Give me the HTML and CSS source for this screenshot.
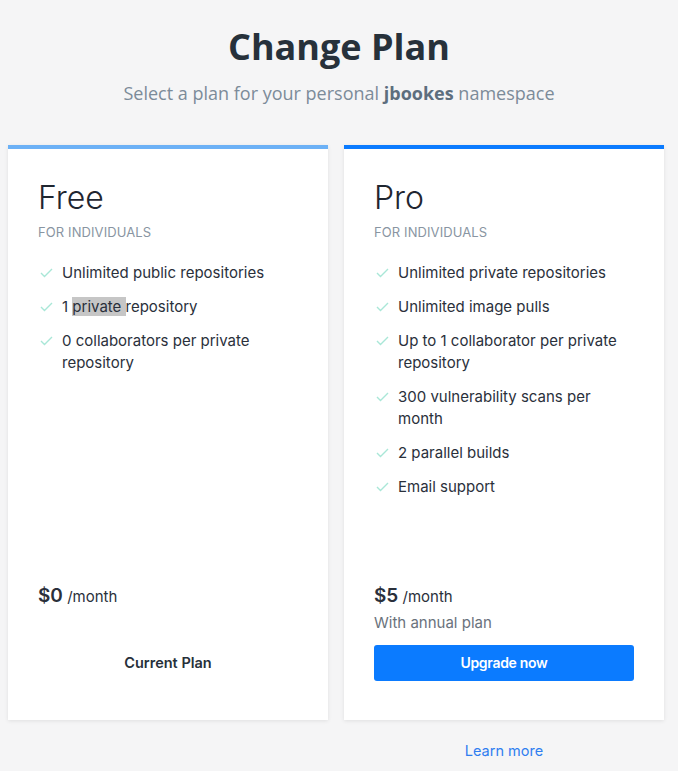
FILE: index.html
```html
<!DOCTYPE html>
<html lang="en">
<head>
<meta charset="utf-8">
<title>Change Plan</title>
<link rel="stylesheet" href="styles.css">
</head>
<body>
<header class="head">
  <h1 class="head-title">Change Plan</h1>
  <p class="head-sub">Select a plan for your personal <strong>jbookes</strong> namespace</p>
</header>
<main class="plans">
  <section class="card card-free">
    <h2 class="card-name">Free</h2>
    <p class="card-kind">FOR INDIVIDUALS</p>
    <ul class="features">
      <li class="feature"><svg class="check" viewBox="0 0 13 10"><polyline points="1,5 4.5,8.5 12,1"/></svg><span>Unlimited public repositories</span></li>
      <li class="feature"><svg class="check" viewBox="0 0 13 10"><polyline points="1,5 4.5,8.5 12,1"/></svg><span>1 <span class="sel">private </span>repository</span></li>
      <li class="feature"><svg class="check" viewBox="0 0 13 10"><polyline points="1,5 4.5,8.5 12,1"/></svg><span>0 collaborators per private repository</span></li>
    </ul>
    <div class="card-foot">
      <p class="price"><strong>$0</strong> /month</p>
      <p class="note"></p>
      <div class="btn btn-current">Current Plan</div>
    </div>
  </section>
  <section class="card card-pro">
    <h2 class="card-name">Pro</h2>
    <p class="card-kind">FOR INDIVIDUALS</p>
    <ul class="features">
      <li class="feature"><svg class="check" viewBox="0 0 13 10"><polyline points="1,5 4.5,8.5 12,1"/></svg><span>Unlimited private repositories</span></li>
      <li class="feature"><svg class="check" viewBox="0 0 13 10"><polyline points="1,5 4.5,8.5 12,1"/></svg><span>Unlimited image pulls</span></li>
      <li class="feature"><svg class="check" viewBox="0 0 13 10"><polyline points="1,5 4.5,8.5 12,1"/></svg><span>Up to 1 collaborator per private repository</span></li>
      <li class="feature"><svg class="check" viewBox="0 0 13 10"><polyline points="1,5 4.5,8.5 12,1"/></svg><span>300 vulnerability scans per month</span></li>
      <li class="feature"><svg class="check" viewBox="0 0 13 10"><polyline points="1,5 4.5,8.5 12,1"/></svg><span>2 parallel builds</span></li>
      <li class="feature"><svg class="check" viewBox="0 0 13 10"><polyline points="1,5 4.5,8.5 12,1"/></svg><span>Email support</span></li>
    </ul>
    <div class="card-foot">
      <p class="price"><strong>$5</strong> /month</p>
      <p class="note">With annual plan</p>
      <a class="btn btn-primary" href="#">Upgrade now</a>
    </div>
  </section>
  <div></div>
  <a class="learn" href="#">Learn more</a>
</main>
</body>
</html>
```

FILE: styles.css
```css
* { box-sizing: border-box; }
html, body { margin: 0; padding: 0; }
body {
  background: #f5f5f6;
  font-family: Inter, "Liberation Sans", sans-serif;
  color: #27303a;
}
.head {
  text-align: center;
  padding-top: 22px;
}
.head-title {
  margin: 0;
  font-family: "Open Sans", sans-serif;
  font-weight: 700;
  font-size: 36px;
  line-height: 49px;
  color: #27313b;
}
.head-sub {
  margin: 10px 0 0;
  font-family: "Open Sans", sans-serif;
  font-size: 18px;
  line-height: 24px;
  color: #7c8b99;
}
.head-sub strong { color: #5d6e7e; font-weight: 700; }

.plans {
  display: grid;
  grid-template-columns: 320px 320px;
  column-gap: 16px;
  row-gap: 20px;
  padding-left: 8px;
  margin-top: 40px;
}
.card {
  background: #fff;
  min-height: 575px;
  padding: 30px 30px 39px;
  display: flex;
  flex-direction: column;
  box-shadow: 0 1px 4px rgba(0, 0, 0, 0.09);
}
.card-free { border-top: 4px solid #6cb1f6; }
.card-pro { border-top: 4px solid #0b7bff; }
.card-name {
  margin: 0;
  font-size: 32px;
  line-height: 38px;
  font-weight: 300;
  color: #1f2630;
}
.card-kind {
  margin: 7px 0 0;
  font-size: 13px;
  line-height: 16px;
  color: #8995a2;
  letter-spacing: 0.1px;
}
.features {
  list-style: none;
  margin: 22px 0 0;
  padding: 0;
  display: flex;
  flex-direction: column;
  gap: 12px;
}
.feature {
  display: flex;
  align-items: flex-start;
  font-size: 15px;
  line-height: 22px;
  color: #2a303b;
}
.check {
  flex: none;
  width: 13px;
  height: 10px;
  margin: 6px 9px 0 2px;
  fill: none;
  stroke: #a9e7d7;
  stroke-width: 1.4;
}
.sel { background: #c6c6c6; }
.card-foot { margin-top: auto; }
.price {
  margin: 0;
  font-size: 15px;
  line-height: 30px;
  color: #2a303b;
}
.price strong {
  font-size: 19px;
  font-weight: 600;
}
.note {
  margin: 0;
  min-height: 22px;
  font-size: 15px;
  line-height: 22px;
  color: #6a727c;
}
.btn {
  display: block;
  margin-top: 11px;
  height: 36px;
  line-height: 35px;
  text-align: center;
  font-size: 14.5px;
  font-weight: 600;
  text-decoration: none;
  border-radius: 3px;
}
.btn-current { color: #27303a; }
.btn-primary {
  background: #0b7bff;
  color: #fff;
  font-size: 14px;
  font-weight: 600;
  letter-spacing: -0.3px;
}
.learn {
  text-align: center;
  font-size: 14.5px;
  line-height: 22px;
  color: #2f7ef0;
  text-decoration: none;
}
```
